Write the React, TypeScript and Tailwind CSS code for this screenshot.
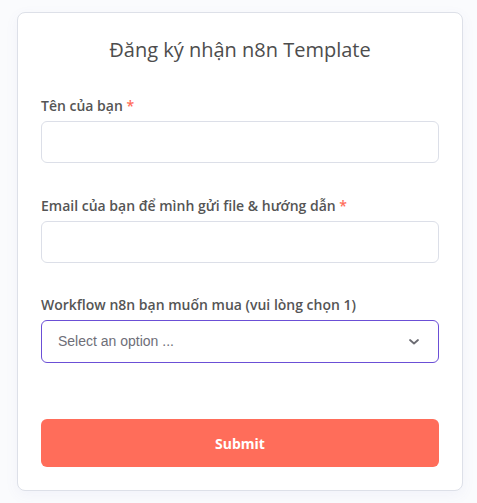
import React from "react";

export default function App() {
  const label = "block text-[14px] leading-[20px] font-semibold text-[#555555]";
  return (
    <div className="min-h-[503px] w-full bg-[#fafbfd] pt-[12px] pl-[17px]" style={{ fontFamily: '"Open Sans", sans-serif' }}>
      <div className="w-[446px] rounded-[8px] border border-[#dde0e8] bg-white px-[23px] pt-[23px] pb-[23px] shadow-[0_4px_14px_rgba(100,110,180,0.06)]">
        <h1 className="text-center text-[20px] leading-[28px] font-normal text-[#4d4d4d]">Đăng ký nhận n8n Template</h1>

        <div className="mt-[32px]">
          <label className={label}>
            Tên của bạn <span className="text-[#ff6d5a]">*</span>
          </label>
          <div className="mt-[5px] h-[42px] rounded-[6px] border border-[#dcdfe8] bg-white" />
        </div>

        <div className="mt-[33px]">
          <label className={label}>
            Email của bạn để mình gửi file &amp; hướng dẫn <span className="text-[#ff6d5a]">*</span>
          </label>
          <div className="mt-[5px] h-[42px] rounded-[6px] border border-[#dcdfe8] bg-white" />
        </div>

        <div className="mt-[32px]">
          <label className={label}>Workflow n8n bạn muốn mua (vui lòng chọn 1)</label>
          <div className="mt-[5px] flex h-[43px] items-center justify-between rounded-[6px] border border-[#6b4fd6] bg-white pl-[16px] pr-[18px]">
            <span className="text-[14px] text-[#6e6e78]" style={{ fontFamily: '"Liberation Sans", Arial, sans-serif' }}>
              Select an option ...
            </span>
            <svg width="12" height="8" viewBox="0 0 12 8" fill="none">
              <path d="M2 2l4 3.5L10 2" stroke="#6b6b72" strokeWidth="1.8" strokeLinecap="round" strokeLinejoin="round" />
            </svg>
          </div>
        </div>

        <button className="mt-[56px] flex h-[48px] w-full items-center justify-center rounded-[6px] bg-[#ff6d5a] text-[14px] font-bold text-white">
          Submit
        </button>
      </div>
    </div>
  );
}
